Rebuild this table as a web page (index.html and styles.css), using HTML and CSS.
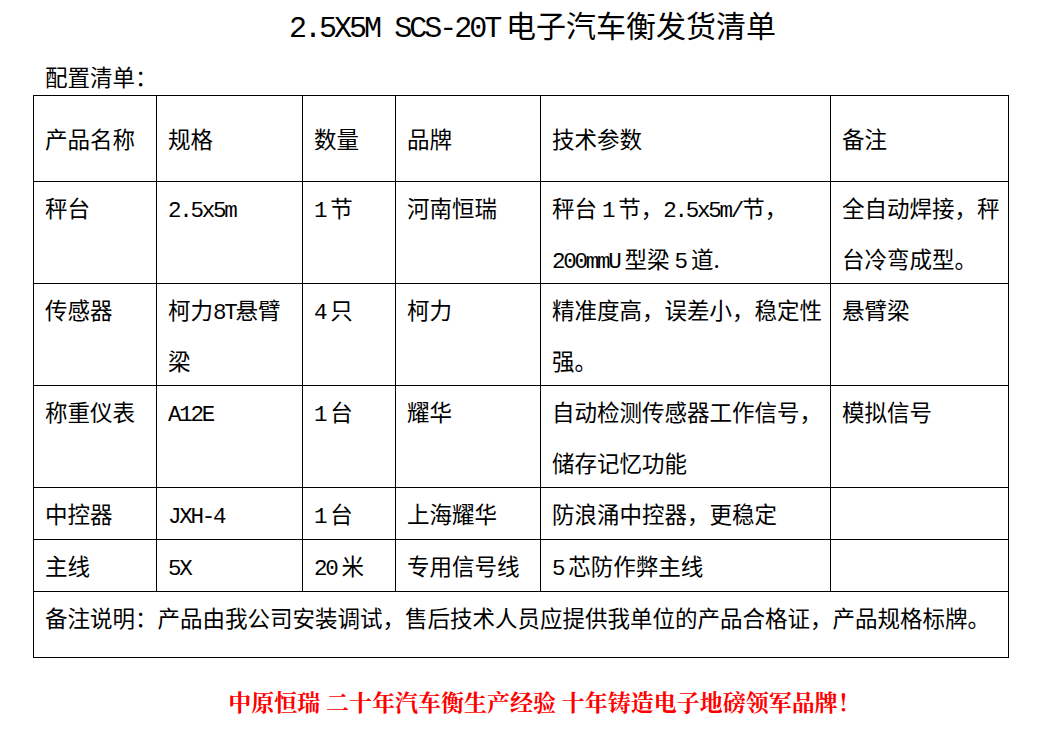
FILE: index.html
```html
<!DOCTYPE html>
<html lang="zh-CN">
<head>
<meta charset="utf-8">
<title>发货清单</title>
<link rel="stylesheet" href="styles.css">
</head>
<body>
<div class="page">
  <h1 class="title"><span class="en">2.5X5M SCS-20T</span> 电子汽车衡发货清单</h1>
  <p class="label">配置清单：</p>
  <table class="list">
    <colgroup>
      <col class="c1"><col class="c2"><col class="c3"><col class="c4"><col class="c5"><col class="c6">
    </colgroup>
    <tr class="head">
      <td>产品名称</td><td>规格</td><td>数量</td><td>品牌</td><td>技术参数</td><td>备注</td>
    </tr>
    <tr class="two">
      <td>秤台</td>
      <td><span class="en">2.5x5m</span></td>
      <td><span class="en">1</span> 节</td>
      <td>河南恒瑞</td>
      <td>秤台 <span class="en">1</span> 节，<span class="en">2.5x5m/</span>节，<br><span class="en">200mmU</span> 型梁 <span class="en">5</span> 道.</td>
      <td>全自动焊接，秤<br>台冷弯成型。</td>
    </tr>
    <tr class="two">
      <td>传感器</td>
      <td>柯力<span class="en">8T</span>悬臂<br>梁</td>
      <td><span class="en">4</span> 只</td>
      <td>柯力</td>
      <td>精准度高，误差小，稳定性<br>强。</td>
      <td>悬臂梁</td>
    </tr>
    <tr class="two">
      <td>称重仪表</td>
      <td><span class="en">A12E</span></td>
      <td><span class="en">1</span> 台</td>
      <td>耀华</td>
      <td>自动检测传感器工作信号，<br>储存记忆功能</td>
      <td>模拟信号</td>
    </tr>
    <tr>
      <td>中控器</td>
      <td><span class="en">JXH-4</span></td>
      <td><span class="en">1</span> 台</td>
      <td>上海耀华</td>
      <td>防浪涌中控器，更稳定</td>
      <td></td>
    </tr>
    <tr>
      <td>主线</td>
      <td><span class="en">5X</span></td>
      <td><span class="en">20</span> 米</td>
      <td>专用信号线</td>
      <td><span class="en">5</span> 芯防作弊主线</td>
      <td></td>
    </tr>
    <tr class="foot">
      <td colspan="6">备注说明：产品由我公司安装调试，售后技术人员应提供我单位的产品合格证，产品规格标牌。</td>
    </tr>
  </table>
  <p class="slogan">中原恒瑞 二十年汽车衡生产经验 十年铸造电子地磅领军品牌！</p>
</div>
</body>
</html>
```

FILE: styles.css
```css
html, body {
  margin: 0;
  padding: 0;
  background: #ffffff;
}

body {
  font-family: "Noto Sans CJK SC", "Noto Sans", sans-serif;
  color: #000000;
}

.page {
  width: 975px;
  margin-left: 33px;
}

.en {
  font-family: "Liberation Mono", "DejaVu Sans Mono", monospace;
  font-size: 1em;
  letter-spacing: -0.1em;
  line-height: 1;
}

.title {
  margin: 0;
  padding: 4px 0 0 24px;
  font-size: 30px;
  font-weight: normal;
  line-height: 40px;
  text-align: center;
  white-space: nowrap;
}

.label {
  margin: 17px 0 4px 0;
  padding-left: 12px;
  font-size: 22.5px;
  line-height: 30px;
}

.list {
  width: 975px;
  table-layout: fixed;
  border-collapse: collapse;
  font-size: 22.5px;
}

.c1 { width: 123px; }
.c2 { width: 146px; }
.c3 { width: 93px; }
.c4 { width: 145px; }
.c5 { width: 290px; }
.c6 { width: 178px; }

.list td {
  border: 1px solid #000000;
  padding: 0 2px 0 11px;
  line-height: 51px;
  vertical-align: top;
  white-space: nowrap;
  overflow: hidden;
}

.list .two td {
  line-height: 50.5px;
}

.list .head td {
  height: 85px;
  vertical-align: middle;
}

.list .foot td {
  height: 65px;
}

.slogan {
  margin: 29px 0 0 0;
  padding-left: 48px;
  font-family: "Noto Serif CJK SC", "Noto Sans CJK SC", serif;
  font-size: 23px;
  line-height: 30px;
  font-weight: bold;
  color: #ff0000;
  text-align: center;
  white-space: nowrap;
}
```
